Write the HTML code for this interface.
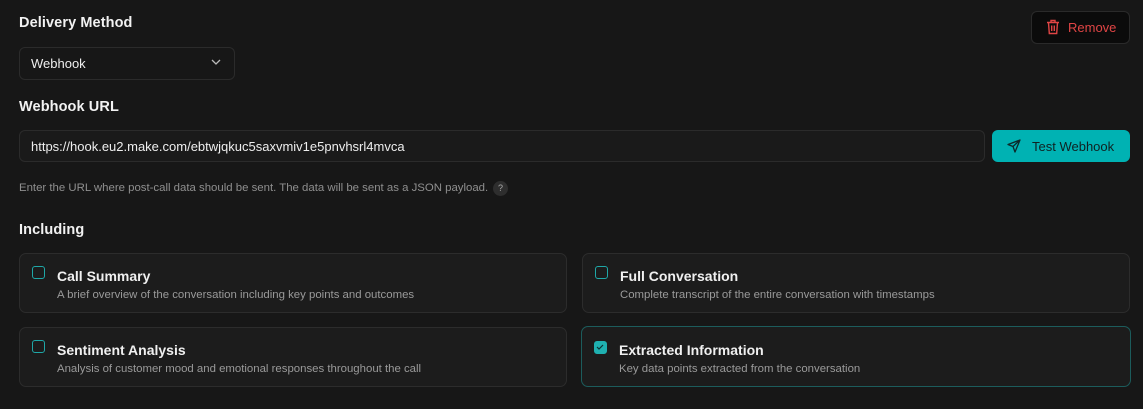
<!DOCTYPE html>
<html><head><meta charset="utf-8"><style>
*{box-sizing:border-box;margin:0;padding:0}
body{width:1143px;height:409px;background:#171717;font-family:"Liberation Sans",sans-serif;position:relative;overflow:hidden;color:#fff}
.abs{position:absolute}
.h{font-size:14.5px;font-weight:bold;color:#f2f2f2;letter-spacing:0.1px}
.box{border:1px solid #2b2b2b;border-radius:6px;background:#1a1a1a}
.card{position:absolute;border:1px solid #2c2c2c;border-radius:7px;background:#1c1c1c;height:60px}
.card .cb{position:absolute;left:12px;top:12px;width:13px;height:13px;border:1.5px solid #1fa7a7;border-radius:3px}
.card .t{position:absolute;left:37px;top:14px;font-size:14px;font-weight:bold;color:#f0f0f0}
.card .d{position:absolute;left:37px;top:35px;font-size:11.4px;color:#9a9a9a}
</style></head><body>
<div class="abs h" style="left:19px;top:15px">Delivery Method</div>
<div class="abs box" style="left:19px;top:47px;width:216px;height:33px;background:#171717"></div>
<div class="abs" style="left:31px;top:56px;font-size:13px;color:#eee">Webhook</div>
<svg class="abs" style="left:210px;top:57px" width="12" height="10" viewBox="0 0 12 10"><path d="M2 3l4 4 4-4" fill="none" stroke="#bbb" stroke-width="1.3"/></svg>

<div class="abs" style="left:1031px;top:11px;width:99px;height:33px;background:#0b0b0b;border:1px solid #2a2a2a;border-radius:6px"></div>
<svg class="abs" style="left:1046px;top:19px" width="14" height="16" viewBox="0 0 14 16"><path d="M1 3.5h12M5 3.5V1.5h4v2M2.5 3.5l.8 11h7.4l.8-11M5.7 6.5v5.5M8.3 6.5v5.5" fill="none" stroke="#e04545" stroke-width="1.4"/></svg>
<div class="abs" style="left:1068px;top:20px;font-size:13px;color:#e04545">Remove</div>

<div class="abs h" style="left:19px;top:99px">Webhook URL</div>
<div class="abs box" style="left:19px;top:130px;width:966px;height:32px"></div>
<div class="abs" style="left:31px;top:139px;font-size:13px;color:#eee">https://hook.eu2.make.com/ebtwjqkuc5saxvmiv1e5pnvhsrl4mvca</div>
<div class="abs" style="left:992px;top:130px;width:138px;height:32px;background:#00b2b3;border-radius:6px"></div>
<svg class="abs" style="left:1007px;top:139px" width="14" height="14" viewBox="0 0 14 14"><path d="M13 1L1 5.5l5 2 2 5.5zM13 1L6 7.5" fill="none" stroke="#0d2a2a" stroke-width="1.3" stroke-linejoin="round"/></svg>
<div class="abs" style="left:1032px;top:139px;font-size:13px;color:#0f2222">Test Webhook</div>

<div class="abs" style="left:19px;top:182px;font-size:11.4px;color:#8f8f8f">Enter the URL where post-call data should be sent. The data will be sent as a JSON payload.</div>
<div class="abs" style="left:493px;top:181px;width:15px;height:15px;border-radius:8px;background:#2e2e2e;font-size:9px;color:#aaa;text-align:center;line-height:15px">?</div>

<div class="abs h" style="left:19px;top:222px">Including</div>

<div class="card" style="left:19px;top:253px;width:548px"><div class="cb"></div><div class="t">Call Summary</div><div class="d">A brief overview of the conversation including key points and outcomes</div></div>
<div class="card" style="left:582px;top:253px;width:548px"><div class="cb"></div><div class="t">Full Conversation</div><div class="d">Complete transcript of the entire conversation with timestamps</div></div>
<div class="card" style="left:19px;top:327px;width:548px"><div class="cb"></div><div class="t">Sentiment Analysis</div><div class="d">Analysis of customer mood and emotional responses throughout the call</div></div>
<div class="card" style="left:581px;top:326px;width:550px;height:61px;border:1.5px solid #1c5c5c"><div class="cb" style="background:#1fb0b0;border-color:#1fb0b0;left:12px;top:14px"><svg width="10" height="10" viewBox="0 0 10 10" style="position:absolute;left:0;top:0"><path d="M2 5l2 2 4-4" fill="none" stroke="#0d3030" stroke-width="1.2"/></svg></div><div class="t" style="top:15px">Extracted Information</div><div class="d" style="top:36px">Key data points extracted from the conversation</div></div>
</body></html>
